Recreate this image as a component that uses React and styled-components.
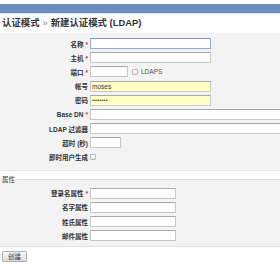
import React from 'react';
import styled, { createGlobalStyle } from 'styled-components';

const GlobalStyle = createGlobalStyle`
  body {
    margin: 0;
    background: #fff;
    font-family: "Liberation Sans", "Noto Sans CJK SC", sans-serif;
    color: #333;
  }
`;

const Page = styled.div`
  width: 280px;
  height: 268px;
  overflow: hidden;
  padding-top: 4px;
  box-sizing: border-box;
`;

const TopBar = styled.div`
  height: 9px;
  background: #6b8dbd;
  border-bottom: 1px solid #d6e1ee;
`;

const Title = styled.h1`
  margin: 0;
  padding: 3px 2px 4px;
  font-size: 9.4px;
  line-height: 12px;
  font-weight: bold;
  color: #333;
  span {
    color: #888;
    font-weight: normal;
    margin: 0 3px;
  }
`;

const Panel = styled.div`
  background: #f3f3f3;
  border-bottom: 1px solid #e2e2e2;
  padding: 5px 0 7px;
  display: flex;
  flex-direction: column;
  gap: 3.2px;
`;

const Fieldset = styled.fieldset`
  margin: 5px 0 0;
  padding: 4px 0 5px;
  min-width: 0;
  background: #f3f3f3;
  border: 0;
  border-top: 1px solid #dedede;
  border-bottom: 1px solid #e2e2e2;
  display: flex;
  flex-direction: column;
  gap: 3.3px;
`;

const Legend = styled.legend`
  padding: 0 2px;
  font-size: 6.5px;
  line-height: 8px;
  color: #333;
`;

const Row = styled.div`
  display: grid;
  grid-template-columns: 90px 1fr;
  align-items: center;
  height: 11px;
`;

const Label = styled.label`
  text-align: right;
  padding-right: 2px;
  font-size: 6.5px;
  font-weight: bold;
  color: #333;
  white-space: nowrap;
  b {
    color: #c33;
    margin-left: 2px;
  }
`;

const Controls = styled.div`
  display: flex;
  align-items: center;
  gap: 4px;
  min-width: 0;
`;

const Input = styled.div`
  box-sizing: border-box;
  width: ${(p) => p.$w}px;
  height: 11px;
  flex: none;
  background: ${(p) => (p.$fill ? '#ffffc6' : '#fff')};
  border: 1px solid ${(p) => (p.$focus ? '#8fa9d3' : '#c8c8c8')};
  border-top-color: ${(p) => (p.$focus ? '#7f9cca' : '#a8a8a8')};
  font-size: ${(p) => (p.$dots ? '5px' : '6.5px')};
  line-height: 9px;
  padding-left: 1px;
  color: #333;
  letter-spacing: ${(p) => (p.$dots ? '0.2px' : '0')};
`;

const Check = styled.span`
  display: inline-block;
  width: 6px;
  height: 6px;
  box-sizing: border-box;
  border: 1px solid #b8b8b8;
  border-radius: 1px;
  background: linear-gradient(#fff, #e6e6e6);
`;

const Small = styled.span`
  font-size: 6.5px;
  color: #555;
  margin-left: -1px;
`;

const Button = styled.button`
  display: block;
  margin: 4px 0 0 2px;
  height: 11px;
  width: 25px;
  padding: 0;
  font-family: inherit;
  font-size: 6.5px;
  line-height: 9px;
  color: #333;
  border: 1px solid #b0b0b0;
  border-radius: 1px;
  background: linear-gradient(#fafafa, #dcdcdc);
`;

const mainFields = [
  { label: '名称', req: true, w: 121, focus: true },
  { label: '主机', req: true, w: 121 },
  { label: '端口', req: true, w: 38, ldaps: true },
  { label: '帐号', w: 121, fill: true, value: 'moses' },
  { label: '密码', w: 121, fill: true, value: '••••••••', dots: true },
  { label: 'Base DN', req: true, w: 220 },
  { label: 'LDAP 过滤器', w: 220 },
  { label: '超时 (秒)', w: 31 },
  { label: '即时用户生成', check: true },
];

const attrFields = [
  { label: '登录名属性', req: true },
  { label: '名字属性' },
  { label: '姓氏属性' },
  { label: '邮件属性' },
];

const Field = ({ label, req, w, focus, fill, value, dots, ldaps, check }) => (
  <Row>
    <Label>
      {label}
      {req && <b>*</b>}
    </Label>
    <Controls>
      {check ? (
        <Check />
      ) : (
        <Input $w={w} $focus={focus} $fill={fill} $dots={dots}>
          {value}
        </Input>
      )}
      {ldaps && (
        <>
          <Check />
          <Small>LDAPS</Small>
        </>
      )}
    </Controls>
  </Row>
);

export default function App() {
  return (
    <Page>
      <GlobalStyle />
      <TopBar />
      <Title>
        认证模式<span>»</span>新建认证模式 (LDAP)
      </Title>
      <Panel>
        {mainFields.map((f) => (
          <Field key={f.label} {...f} />
        ))}
      </Panel>
      <Fieldset>
        <Legend>属性</Legend>
        {attrFields.map((f) => (
          <Field key={f.label} {...f} w={86} />
        ))}
      </Fieldset>
      <Button>创建</Button>
    </Page>
  );
}
